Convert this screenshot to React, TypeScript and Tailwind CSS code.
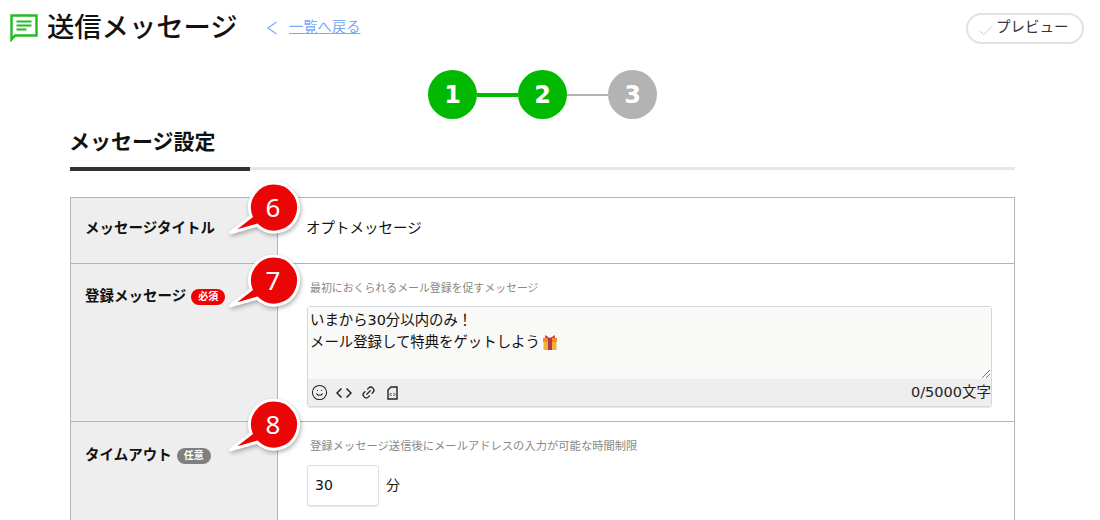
import { Smile, Link2, Check } from 'lucide-react';

const font = "font-['DejaVu_Sans','Noto_Sans_CJK_JP',sans-serif]";

// 吹き出しの番号
const Balloon = ({ num, className }: { num: string; className: string }) => (
  <div className={`absolute w-[80px] h-[70px] ${className}`}>
    <svg width="80" height="70" viewBox="0 0 80 70" className="absolute left-0 top-0 drop-shadow-[1px_2px_2px_rgba(0,0,0,0.3)]">
      <path d="M3 55 L24.2 38.5 A24.5 24.5 0 1 1 30 47.2 Z" fill="#ea0606" stroke="#fff" strokeWidth="3" strokeLinejoin="miter" />
    </svg>
    <span className="absolute left-[26px] top-[9px] w-[40px] text-center text-[26px] leading-[40px] text-white font-['Noto_Sans',sans-serif]">{num}</span>
  </div>
);

const Step = ({ n, active }: { n: number; active: boolean }) => (
  <div className={`w-[49px] h-[49px] rounded-full flex items-center justify-center text-white text-[24px] font-bold ${active ? 'bg-[#00b900]' : 'bg-[#b3b3b3]'}`}>
    {n}
  </div>
);

const App = () => {
  return (
    <div className={`relative w-[1100px] h-[520px] overflow-hidden bg-white text-[#111] ${font}`}>
      {/* Header */}
      <div className="flex items-center h-[55px] pl-[10px] pr-[16px]">
        <svg width="28" height="28" viewBox="0 0 28 28" fill="none" stroke="#22bb22" className="mt-[1px]">
          <path d="M1.5 1.5 H26.5 V21.5 H5 L1.5 25.5 Z" strokeWidth="2.4" />
          <path d="M6.5 7.5 H21.5 M6.5 11.5 H21.5 M6.5 15.5 H16.5" strokeWidth="2" />
        </svg>
        <h1 className="ml-[9px] w-[190px] text-[27.3px] font-medium tracking-normal leading-none whitespace-nowrap">送信メッセージ</h1>
        <svg width="10" height="14" viewBox="0 0 10 14" fill="none" stroke="#7aa9fa" strokeWidth="1.2" className="ml-[30px]">
          <path d="M9.5 1 L1 7 L9.5 13" />
        </svg>
        <a className="ml-[12px] text-[14.3px] text-[#7aa9fa] underline">一覧へ戻る</a>
        <button className="ml-auto flex items-center w-[118px] h-[31px] mt-[2px] pl-[9px] rounded-full border-2 border-[#e2e2e2] bg-white text-[14.5px] text-[#333]">
          <Check size={18} strokeWidth={1.2} className="text-[#c8c8c8] mt-[4px]" />
          <span className="ml-[1px] -mt-[2px]">プレビュー</span>
        </button>
      </div>

      {/* Steps */}
      <div className="flex items-center justify-center pr-[15px] mt-[15px]">
        <Step n={1} active />
        <div className="w-[41px] h-[4px] bg-[#00b900]" />
        <Step n={2} active />
        <div className="w-[41px] h-[2px] bg-[#b3b3b3]" />
        <Step n={3} active={false} />
      </div>

      <div className="ml-[70px] w-[945px]">
        {/* Section title */}
        <div className="mt-[5px] h-[47px] flex items-end">
          <div className="w-[180px] h-full border-b-4 border-[#333]">
            <h2 className="-ml-[1px] text-[21px] font-bold leading-[36px] whitespace-nowrap">メッセージ設定</h2>
          </div>
          <div className="flex-1 h-[3px] mb-[1px] bg-[#e6e6f0]" />
        </div>

        {/* Form table */}
        <div className="mt-[26px] border border-[#b5b5b5] border-b-0">
          <div className="flex h-[66px] border-b border-[#b5b5b5]">
            <div className="w-[207px] shrink-0 bg-[#eeeeee] border-r border-[#b5b5b5] flex items-center pb-[3px] pl-[14px] text-[14.5px] font-bold">
              メッセージタイトル
            </div>
            <div className="flex items-center pb-[3px] pl-[28px] text-[14.5px]">オプトメッセージ</div>
          </div>

          <div className="flex h-[158px] border-b border-[#b5b5b5]">
            <div className="w-[207px] shrink-0 bg-[#eeeeee] border-r border-[#b5b5b5] flex items-start pt-[22px] pl-[14px] text-[14.5px] font-bold">
              登録メッセージ
              <span className="ml-[5px] mt-[3px] w-[34px] h-[16px] rounded-full bg-[#f00000] text-white text-[10px] leading-[16px] text-center">必須</span>
            </div>
            <div className="flex-1 pl-[29px] pr-[22px] pt-[16px]">
              <p className="pl-[3px] text-[10.9px] leading-[18px] text-[#888]">最初におくられるメール登録を促すメッセージ</p>
              <div className="mt-[8px] border border-[#d6d6de] rounded-[3px] shadow-[0_1px_1px_rgba(0,0,0,0.1)]">
                <div className="relative h-[72px] bg-[#f9f9f7] px-[2px] pt-[2px] text-[14.4px] leading-[22px]">
                  <p>いまから30分以内のみ！</p>
                  <p className="flex items-center">
                    メール登録して特典をゲットしよう
                    <svg width="14" height="15" viewBox="0 0 14 15" className="ml-[3px]">
                      <rect x="0.5" y="4" width="13" height="11" fill="#f2b233" />
                      <rect x="0" y="3" width="14" height="4" fill="#f08a2c" />
                      <rect x="5" y="3" width="4" height="12" fill="#b5364e" />
                      <path d="M7 3 L2 0 V3 Z M7 3 L12 0 V3 Z" fill="#d9433c" />
                    </svg>
                  </p>
                  <svg width="8" height="8" viewBox="0 0 8 8" className="absolute right-[1px] bottom-[1px]" stroke="#777" strokeWidth="1">
                    <path d="M0 8 L8 0 M4 8 L8 4" />
                  </svg>
                </div>
                <div className="h-[27px] bg-[#eeeeee] flex items-center pl-[3px]">
                  <Smile size={17} strokeWidth={1.5} className="text-[#222]" />
                  <svg width="16" height="12" viewBox="0 0 16 12" fill="none" stroke="#222" strokeWidth="1.5" className="ml-[8px]">
                    <path d="M5.5 1.5 L1 6 L5.5 10.5 M10.5 1.5 L15 6 L10.5 10.5" />
                  </svg>
                  <Link2 size={15} strokeWidth={2} className="ml-[9px] -rotate-45 text-[#222]" />
                  <svg width="11" height="14" viewBox="0 0 11 14" fill="none" stroke="#222" strokeWidth="1.4" className="ml-[11px]">
                    <path d="M4 1 H10 V13 H1 V4 Z" />
                    <path d="M4.5 7 L3 8.5 L4.5 10 M6.5 7 L8 8.5 L6.5 10" strokeWidth="1" />
                  </svg>
                  <span className="ml-auto text-[14.5px] text-[#222]">0/5000文字</span>
                </div>
              </div>
            </div>
          </div>

          <div className="flex h-[110px]">
            <div className="w-[207px] shrink-0 bg-[#eeeeee] border-r border-[#b5b5b5] flex items-start pt-[23px] pl-[14px] text-[14.5px] font-bold">
              タイムアウト
              <span className="ml-[5px] mt-[3px] w-[34px] h-[16px] rounded-full bg-[#808080] text-white text-[10px] leading-[16px] text-center">任意</span>
            </div>
            <div className="flex-1 pl-[29px] pt-[16px]">
              <p className="pl-[3px] text-[11.3px] leading-[18px] text-[#888]">登録メッセージ送信後にメールアドレスの入力が可能な時間制限</p>
              <div className="mt-[9px] flex items-center">
                <div className="w-[72px] h-[41px] border border-[#dddddd] rounded-[3px] shadow-[0_1px_1px_rgba(0,0,0,0.1)] flex items-center pl-[7px] text-[14px]">30</div>
                <span className="ml-[7px] text-[14px]">分</span>
              </div>
            </div>
          </div>
        </div>
      </div>

      {/* Callouts */}
      <Balloon num="6" className="left-[227px] top-[178px]" />
      <Balloon num="7" className="left-[227px] top-[251px]" />
      <Balloon num="8" className="left-[227px] top-[395px]" />
    </div>
  );
};

export default App;
